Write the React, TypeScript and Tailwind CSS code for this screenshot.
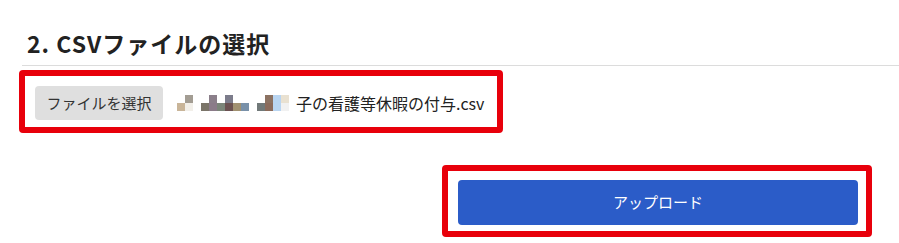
const blocks: [number, number, string][] = [
  // [col, row, colour] in 8px cells, starting at x=177, y=97
  [1, 0, '#a39d93'],
  [4, 0, '#8b7f8a'],
  [6, 0, '#7c7c8b'],
  [11, 0, '#8c7262'],
  [12, 0, '#b9d5f1'],
  [13, 0, '#e9e1d1'],
  [0, 1, '#c9b599'],
  [1, 1, '#f2efe9'],
  [3, 1, '#7b7569'],
  [4, 1, '#8b7b89'],
  [5, 1, '#7b8579'],
  [6, 1, '#6b5151'],
  [7, 1, '#a19171'],
  [8, 1, '#7991a9'],
  [10, 1, '#717979'],
  [11, 1, '#8b6b5b'],
  [12, 1, '#b9d5f1'],
  [13, 1, '#f1f1f1'],
]

function Mosaic() {
  return (
    <svg width="112" height="16" viewBox="0 0 112 16" className="shrink-0">
      {blocks.map(([c, r, fill], i) => (
        <rect key={i} x={c * 8} y={r * 8} width="8" height="8" fill={fill} />
      ))}
    </svg>
  )
}

export default function App() {
  const jp = { fontFamily: '"Noto Sans CJK JP", "Noto Sans", sans-serif' }
  return (
    <div className="w-[899px] h-[243px] bg-white overflow-hidden text-[#333]" style={jp}>
      <div className="pl-[22px] pt-[28px]">
        {/* Heading */}
        <h2 className="text-[23px] font-bold leading-[30px] tracking-[1px] pl-[5px] pb-[7px] text-[#222] border-b border-[#dcdcdc]">
          2. CSVファイルの選択
        </h2>

        {/* File picker */}
        <div className="ml-[-3px] mt-[4px] w-[484px] h-[63px] border-[6px] border-[#e8000b] rounded-[4px] pl-[10px] pt-[10px] flex items-start">
          <button className="w-[128px] h-[34px] bg-[#dfdfdf] rounded-[4px] text-[15px] text-[#333] flex items-center justify-center">
            ファイルを選択
          </button>
          <div className="flex items-center h-[34px] ml-[14px]">
            <Mosaic />
            <span className="text-[16px] text-[#222] ml-[7px] whitespace-nowrap">子の看護等休暇の付与.csv</span>
          </div>
        </div>

        {/* Upload */}
        <div className="flex justify-end pr-[27px] mt-[32px]">
          <div className="w-[430px] h-[72px] border-[6px] border-[#e8000b] rounded-[4px] pl-[10px] pt-[9px]">
            <button className="w-[400px] h-[45px] bg-[#2b5cc8] rounded-[4px] text-white text-[15px] flex items-center justify-center">
              アップロード
            </button>
          </div>
        </div>
      </div>
    </div>
  )
}
